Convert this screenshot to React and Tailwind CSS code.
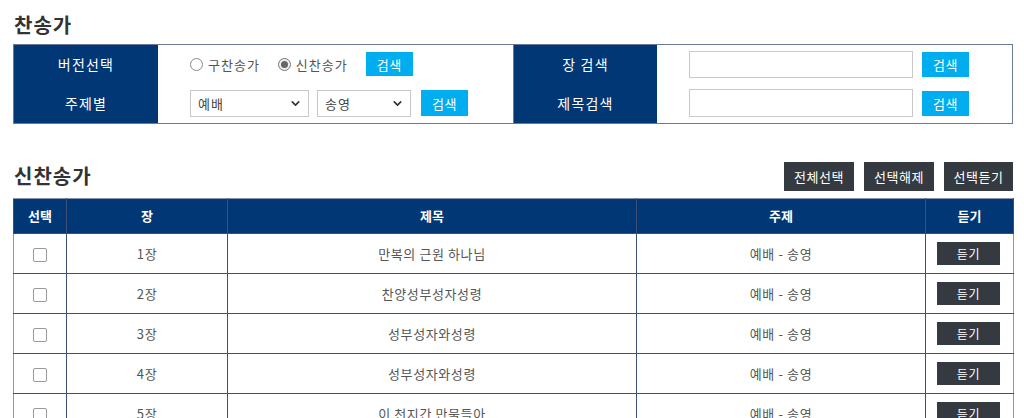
import { ChevronDown } from 'lucide-react';

const songs = [
    { no: 1, title: '만복의 근원 하나님' },
    { no: 2, title: '찬양성부성자성령' },
    { no: 3, title: '성부성자와성령' },
    { no: 4, title: '성부성자와성령' },
    { no: 5, title: '이 천지간 만물들아' },
    { no: 6, title: '목소리 높여서' },
];

const Radio = ({ checked, label }) => (
    <label className="flex items-center gap-[5px] text-[13px] tracking-[1px] text-[#555]">
        <span className={`w-[13px] h-[13px] rounded-full border flex items-center justify-center ${checked ? 'border-[#777] bg-[#eee]' : 'border-[#888] bg-white'}`}>
            {checked && <span className="w-[7px] h-[7px] rounded-full bg-[#666]" />}
        </span>
        {label}
    </label>
);

const FakeSelect = ({ value, width }) => (
    <div className={`${width} h-[27px] border border-[#c8c8c8] bg-white flex items-center justify-between pl-[7px] pr-[6px] text-[13px] tracking-[1px] text-[#444]`}>
        <span>{value}</span>
        <ChevronDown size={13} strokeWidth={3} className="text-[#333]" />
    </div>
);

const SkyButton = ({ h = 'h-[25px]' }) => (
    <button className={`w-[47px] ${h} bg-[#00aeef] text-white text-[13px] tracking-[0.5px]`}>검색</button>
);

const App = () => {
    return (
        <div className="pl-[13px] bg-white min-h-screen" style={{ fontFamily: '"Noto Sans CJK KR", "Noto Sans", sans-serif' }}>
            <div className="w-[1000px]">
                <h2 className="pt-[10px] pb-[4px] text-[20px] tracking-[1px] leading-[30px] font-bold text-[#333] pl-px">찬송가</h2>

                <div className="border border-[#6b7898] grid grid-cols-[144px_355px_144px_1fr] h-[80px]">
                    <div className="bg-[#003774] text-white text-[14px] tracking-[1.2px] flex items-center justify-center">버전선택</div>
                    <div className="flex items-center pl-[32px]">
                        <Radio label="구찬송가" />
                        <span className="w-[18px]" />
                        <Radio checked label="신찬송가" />
                        <span className="w-[18px]" />
                        <SkyButton h="h-[24px]" />
                    </div>
                    <div className="bg-[#003774] text-white text-[14px] tracking-[1.2px] flex items-center justify-center border-l border-[#6b7898]">장 검색</div>
                    <div className="flex items-center pl-[32px] gap-[9px]">
                        <input className="w-[224px] h-[27px] border border-[#c8c8c8] outline-none" />
                        <SkyButton />
                    </div>

                    <div className="bg-[#003774] text-white text-[14px] tracking-[1.2px] flex items-center justify-center">주제별</div>
                    <div className="flex items-center pl-[32px]">
                        <FakeSelect value="예배" width="w-[119px]" />
                        <span className="w-[8px]" />
                        <FakeSelect value="송영" width="w-[94px]" />
                        <span className="w-[10px]" />
                        <SkyButton h="h-[26px]" />
                    </div>
                    <div className="bg-[#003774] text-white text-[14px] tracking-[1.2px] flex items-center justify-center border-l border-[#6b7898]">제목검색</div>
                    <div className="flex items-center pl-[32px] gap-[9px]">
                        <input className="w-[224px] h-[28px] border border-[#c8c8c8] outline-none" />
                        <SkyButton />
                    </div>
                </div>

                <div className="flex items-end justify-between mt-[37px] mb-[7px]">
                    <h2 className="text-[20px] tracking-[1px] leading-[30px] font-bold text-[#333] pl-px">신찬송가</h2>
                    <div className="flex gap-[10px]">
                        <button className="w-[70px] h-[29px] bg-[#343a40] text-white text-[13px] tracking-[0.5px]">전체선택</button>
                        <button className="w-[70px] h-[29px] bg-[#343a40] text-white text-[13px] tracking-[0.5px]">선택해제</button>
                        <button className="w-[69px] h-[29px] bg-[#343a40] text-white text-[13px] tracking-[0.5px]">선택듣기</button>
                    </div>
                </div>

                <table className="w-[1000px] border-collapse table-fixed text-[13px] tracking-[0.6px]">
                    <colgroup>
                        <col className="w-[53px]" />
                        <col className="w-[161px]" />
                        <col className="w-[409px]" />
                        <col className="w-[289px]" />
                        <col className="w-[88px]" />
                    </colgroup>
                    <thead>
                        <tr className="bg-[#003774] text-white h-[35px]">
                            {['선택', '장', '제목', '주제', '듣기'].map((h) => (
                                <th key={h} className="font-bold tracking-normal border border-[#3d4f73] border-t-[#8a96ae]">{h}</th>
                            ))}
                        </tr>
                    </thead>
                    <tbody className="text-[#555]">
                        {songs.map((s) => (
                            <tr key={s.no} className="h-[40px] text-center">
                                <td className="border border-[#3d4f73] border-l-[#8a96ae]">
                                    <span className="inline-block align-middle w-[14px] h-[14px] border border-[#999] rounded-[2px] bg-white" />
                                </td>
                                <td className="border border-[#3d4f73]">{s.no}장</td>
                                <td className="border border-[#3d4f73]">{s.title}</td>
                                <td className="border border-[#3d4f73]">예배 - 송영</td>
                                <td className="border border-[#3d4f73] border-r-[#8a96ae]">
                                    <button className="w-[63px] h-[23px] bg-[#343a40] text-white text-[12px] align-middle mr-[2px]">듣기</button>
                                </td>
                            </tr>
                        ))}
                    </tbody>
                </table>
            </div>
        </div>
    );
};

export default App;
